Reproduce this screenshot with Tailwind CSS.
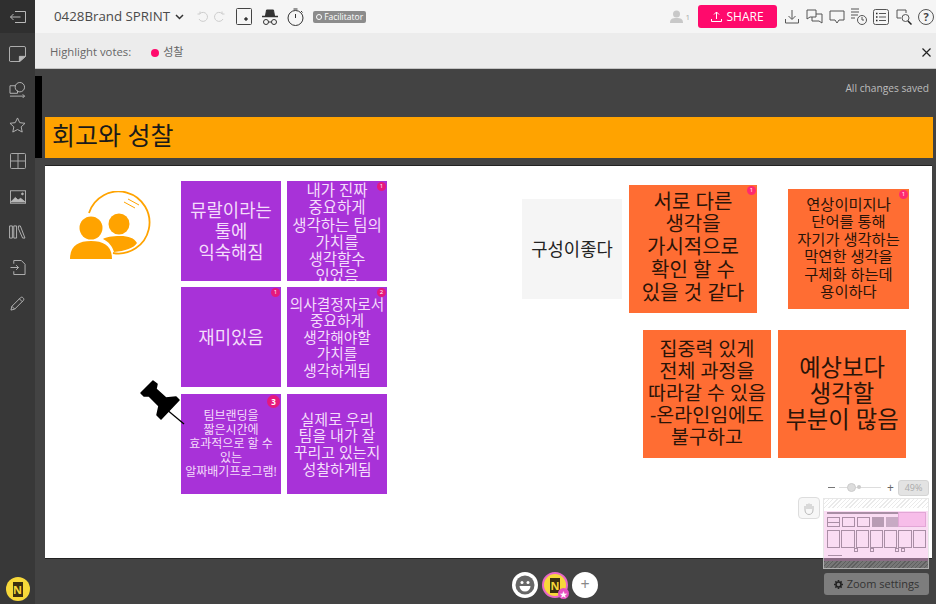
<!DOCTYPE html>
<html lang="ko">
  <head>
    <meta charset="UTF-8">
    <meta name="viewport" content="width=device-width, initial-scale=1.0">
    <script src="https://cdn.jsdelivr.net/npm/@tailwindcss/browser@4"></script>
    <title>0428Brand SPRINT</title>
  </head>
  <body class="w-[936px] h-[604px] overflow-hidden font-['Open_Sans','Noto_Sans_CJK_KR',sans-serif]">
    <div class="flex w-[936px] h-[604px]">
      <!-- left toolbar -->
      <aside class="w-[35px] shrink-0 bg-[#383838] flex flex-col items-center text-[#b8b8b8]">
        <div class="w-full h-[33px] bg-[#2f2f2f] flex items-center justify-center">
          <svg width="16" height="12" viewBox="0 0 16 12" fill="none" stroke="currentColor"><path d="M5 .5h10.500v11H5M.5 6h10M3.500 3 .5 6l3 3"/></svg>
        </div>
        <div class="grid auto-rows-[35.7px] items-center justify-items-center mt-[3px]">
          <svg width="17" height="16" viewBox="0 0 18 17" fill="none" stroke="currentColor"><path d="M2 .5h14a1.500 1.500 0 0 1 1.500 1.500v9l-6 5.500H2A1.500 1.500 0 0 1 .5 16V2A1.500 1.500 0 0 1 2 .5z"/><path d="M11 16.500V11h6.500z" fill="currentColor"/></svg>
          <svg width="17" height="16" viewBox="0 0 18 17" fill="none" stroke="currentColor"><path d="M7 4H1v8h8V9"/><circle cx="11.500" cy="5.500" r="5"/><path d="M1 15h15.500m-2-2 2 2-2 2"/></svg>
          <svg width="17" height="16" viewBox="0 0 18 17" fill="none" stroke="currentColor"><path d="m9 1 2.400 5 5.600.7-4.100 3.800 1.100 5.500L9 13.300 4 16l1.100-5.500L1 6.700 6.600 6z"/></svg>
          <svg width="16" height="16" viewBox="0 0 16 16" fill="none" stroke="#a8a8a8"><rect x=".5" y=".5" width="15" height="15" rx="1"/><path d="M8 .5v15M.5 8h15"/></svg>
          <svg width="16" height="14" viewBox="0 0 18 15" fill="none" stroke="currentColor"><rect x=".5" y=".5" width="17" height="14"/><path d="M1 13l5-5 3 3 3-2 5 4z" fill="currentColor"/><circle cx="14" cy="4" r="1" fill="currentColor"/></svg>
          <svg width="17" height="14" viewBox="0 0 18 15" fill="none" stroke="currentColor"><path d="M.5 1h3v13h-3zM5 1h3v13H5zM10 1h2l5 13h-2.500L10 4z"/></svg>
          <svg width="16" height="15" viewBox="0 0 17 16" fill="none" stroke="currentColor"><path d="M4 4V.5h8l4 4v11H4V12M.5 8H9M6.500 5.500 9 8l-2.500 2.500"/></svg>
          <svg width="15" height="15" viewBox="0 0 16 16" fill="none" stroke="currentColor"><path d="M1 15l1-4L11 2c1-1 2-1 3 0s1 2 0 3l-9 9zM2 11l3 3M10 3l3 3"/></svg>
        </div>
        <div class="mt-auto mb-[3px] w-[24px] h-[24px] rounded-full bg-[#f7d83a] flex items-center justify-center">
          <div class="w-[10px] h-[15px] bg-[#3b2f10] text-[#f7d83a] text-[11px] leading-[15px] font-bold text-center">N</div>
        </div>
      </aside>

      <div class="flex-1 min-w-0 flex flex-col">
        <!-- top bar -->
        <header class="h-[33px] bg-[#f5f5f5] flex items-center relative text-[#555]">
          <span class="ml-[19px] text-[13.300px] text-[#4a4a4a]">0428Brand SPRINT</span>
          <svg class="ml-[5px]" width="9" height="6" viewBox="0 0 9 6" fill="none" stroke="#333" stroke-width="1.500"><path d="m1 1 3.500 3.500L8 1"/></svg>
          <svg class="ml-[13px]" width="11" height="11" viewBox="0 0 11 11" fill="none" stroke="#ccc"><path d="M3 2.500A4.500 4.500 0 1 1 2 8M3 .5v2.500H.5"/></svg>
          <svg class="ml-[6px]" width="11" height="11" viewBox="0 0 11 11" fill="none" stroke="#ccc"><path d="M8 2.500A4.500 4.500 0 1 0 9 8M8 .5v2.500h2.500"/></svg>
          <svg class="ml-[11px]" width="16" height="17" viewBox="0 0 16 17" fill="none" stroke="#444"><rect x=".5" y=".5" width="15" height="16" rx="1"/><circle cx="10" cy="11" r="1.300" fill="#222"/></svg>
          <svg class="ml-[10px]" width="16" height="16" viewBox="0 0 16 16" fill="none" stroke="#333"><path d="M3.500 7 4.500 1h7l1 6z" fill="#333"/><path d="M0 7.500h16" stroke-width="1.500"/><circle cx="4" cy="13" r="2.500"/><circle cx="12" cy="13" r="2.500"/><path d="M6.500 13h3"/></svg>
          <svg class="ml-[9px]" width="17" height="18" viewBox="0 0 17 18" fill="none" stroke="#333"><circle cx="8.500" cy="10" r="7.500"/><path d="M8.500 6v4M6.500 1h4M14 3l1.500 1.500"/></svg>
          <span class="ml-[9px] h-[12px] w-[53px] justify-center rounded-[2px] bg-[#8c8c8c] text-white text-[8.500px] leading-[12px] flex items-center gap-[2px]"><span class="w-[6px] h-[6px] rounded-full border border-white"></span>Facilitator</span>

          <div class="ml-auto flex items-center">
            <svg width="13" height="13" viewBox="0 0 13 13" fill="#c8c8c8"><circle cx="6.500" cy="4" r="3.500"/><path d="M0 13c0-4 2-5 6.500-5s6.500 1 6.500 5z"/></svg>
            <span class="ml-[2px] text-[8px] text-[#aaa]">1</span>
            <button class="ml-[8px] w-[79px] h-[23px] rounded-[3px] bg-[#ff0a6c] text-white text-[12px] flex items-center justify-center gap-[4px]">
              <svg width="11" height="11" viewBox="0 0 11 11" fill="none" stroke="#fff"><path d="M5.500 8V1M3 3.500 5.500 1 8 3.500M.5 8v2.500h10V8"/></svg>SHARE
            </button>
            <svg class="ml-[8px]" width="14" height="15" viewBox="0 0 14 15" fill="none" stroke="#555"><path d="M7 1v9M3.500 7 7 10.500 10.500 7M.5 10v4h13v-4"/></svg>
            <svg class="ml-[7px]" width="17" height="15" viewBox="0 0 17 15" fill="none" stroke="#555"><path d="M1 1h9v7H4L1 10z M6 8v4h7l3 2V5h-6"/></svg>
            <svg class="ml-[6px]" width="16" height="14" viewBox="0 0 16 14" fill="none" stroke="#555"><path d="M1 1h14v9h-5l-2 3-2-3H1z"/></svg>
            <svg class="ml-[6px]" width="16" height="17" viewBox="0 0 16 17" fill="none" stroke="#555"><path d="M0 1h8M0 4h8M0 7h7M0 10h4"/><circle cx="11" cy="12" r="4.500"/><path d="M11 9v3h2"/></svg>
            <svg class="ml-[6px]" width="16" height="16" viewBox="0 0 16 16" fill="none" stroke="#555"><rect x=".5" y=".5" width="15" height="15" rx="2"/><path d="M6 4.500h7M6 8h7M6 11.500h7"/><path d="M3 4.500h1.500M3 8h1.500M3 11.500h1.500" stroke="#222" stroke-width="1.500"/></svg>
            <svg class="ml-[7px]" width="16" height="16" viewBox="0 0 16 16" fill="none" stroke="#555"><path d="M5 9H1V1h9v3"/><circle cx="9.500" cy="9" r="3.500"/><path d="m12 12 3.500 3.500" stroke-width="1.500" stroke="#222"/></svg>
            <span class="ml-[6px] mr-[2px] w-[16px] h-[16px] rounded-full border border-[#555] text-[11px] leading-[14px] text-center font-bold text-[#444]">?</span>
          </div>
        </header>

        <!-- highlight votes bar -->
        <div class="h-[36px] pt-[4px] bg-[#ececec] border-b border-[#c4c4c4] flex items-center text-[11.300px] text-[#666] relative">
          <span class="ml-[15px]">Highlight votes:</span>
          <span class="ml-[20px] w-[8px] h-[8px] rounded-full bg-[#ff0a6c]"></span>
          <span class="ml-[4px] text-[11px]">성찰</span>
          <svg class="ml-auto mr-[5px]" width="9" height="9" viewBox="0 0 9 9" fill="none" stroke="#222" stroke-width="1.200"><path d="m.5.5 8 8m0-8-8 8"/></svg>
        </div>

        <!-- board -->
        <main class="flex-1 bg-[#434343] relative overflow-hidden">
          <span class="absolute right-[7px] top-[12px] text-[10.200px] text-[#bdbdbd]">All changes saved</span>
          <div class="absolute left-0 top-[7px] w-[7px] h-[82px] bg-black"></div>
          <div class="absolute left-[10px] top-[48px] w-[888px] h-[41px] bg-[#ffa300] text-[25px] leading-[36px] pl-[7px] text-[#1a1a1a]">회고와 성찰</div>

          <div class="absolute left-[10px] top-[96px] w-[887px] h-[394px] bg-white border-y border-[#222]"></div>

          <!-- mirror people icon -->
          <svg class="absolute left-[35px] top-[122px]" width="82" height="70" viewBox="0 0 82 70" fill="#ffa300">
            <path d="M19 22A31 31 0 1 1 43 62" fill="none" stroke="#ffa300" stroke-width="1.800"/>
            <path d="M54 11l11 6M58 8l11 6" fill="none" stroke="#ffa300"/>
            <circle cx="21" cy="37" r="11.500"/>
            <circle cx="49" cy="33" r="10.500"/>
            <path d="M0 68c0-13 8-18 21-18s21 5 21 18z"/>
            <path d="M33 48c3-2 9-3 17-3 9 0 14 2 17 7-3 5-12 8-23 9-2-6-5-10-11-13z"/>
          </svg>

          <!-- sticky notes -->
          <div class="absolute left-[146px] top-[112px] w-[100px] h-[100px] bg-[#a832d8] text-[#f4ddfb] text-[17.700px] leading-[21px] text-center flex items-center justify-center">뮤랄이라는<br>툴에<br>익숙해짐</div>
          <div class="absolute left-[252px] top-[112px] w-[100px] h-[100px] bg-[#a832d8] text-[#f4ddfb] text-[15.500px] leading-[17.300px] text-center overflow-hidden pt-[1px]">내가 진짜<br>중요하게<br>생각하는 팀의<br>가치를<br>생각할수<br>있었음
            <span class="absolute right-[1px] top-[1px] w-[9px] h-[9px] rounded-full bg-[#e5197d] text-white text-[6px] leading-[9px]">1</span>
          </div>
          <div class="absolute left-[146px] top-[218px] w-[100px] h-[100px] bg-[#a832d8] text-[#f4ddfb] text-[17.800px] text-center flex items-center justify-center">재미있음
            <span class="absolute right-[1px] top-[1px] w-[9px] h-[9px] rounded-full bg-[#e5197d] text-white text-[6px] leading-[9px]">1</span>
          </div>
          <div class="absolute left-[252px] top-[218px] w-[100px] h-[100px] bg-[#a832d8] text-[#f4ddfb] text-[14.700px] leading-[16.500px] text-center flex items-center justify-center">의사결정자로서<br>중요하게<br>생각해야할<br>가치를<br>생각하게됨
            <span class="absolute right-[1px] top-[1px] w-[9px] h-[9px] rounded-full bg-[#e5197d] text-white text-[6px] leading-[9px]">2</span>
          </div>
          <div class="absolute left-[146px] top-[325px] w-[100px] h-[100px] bg-[#a832d8] text-[#f4ddfb] text-[12px] leading-[14px] text-center flex items-center justify-center">팀브랜딩을<br>짧은시간에<br>효과적으로 할 수<br>있는<br>알짜배기프로그램!
            <span class="absolute right-[1px] top-[1px] w-[13px] h-[13px] rounded-full bg-[#e5197d] text-white text-[8px] leading-[13px] font-bold">3</span>
          </div>
          <div class="absolute left-[252px] top-[325px] w-[100px] h-[100px] bg-[#a832d8] text-[#f4ddfb] text-[15px] leading-[16.700px] text-center flex items-center justify-center">실제로 우리<br>팀을 내가 잘<br>꾸리고 있는지<br>성찰하게됨</div>

          <div class="absolute left-[487px] top-[130px] w-[100px] h-[100px] bg-[#f5f5f5] text-[#222] text-[17.700px] text-center flex items-center justify-center">구성이좋다</div>

          <div class="absolute left-[594px] top-[116px] w-[128px] h-[128px] pb-[3px] bg-[#ff6d33] text-[#2a1408] text-[20px] leading-[22.700px] text-center flex items-center justify-center">서로 다른<br>생각을<br>가시적으로<br>확인 할 수<br>있을 것 같다
            <span class="absolute right-[1px] top-[1px] w-[9px] h-[9px] rounded-full bg-[#ff2a70] text-white text-[6px] leading-[9px]">1</span>
          </div>
          <div class="absolute left-[753px] top-[120px] w-[121px] h-[120px] pb-[2px] bg-[#ff6d33] text-[#2a1408] text-[15.300px] leading-[17.500px] text-center flex items-center justify-center">연상이미지나<br>단어를 통해<br>자기가 생각하는<br>막연한 생각을<br>구체화 하는데<br>용이하다
            <span class="absolute right-[1px] top-[1px] w-[9px] h-[9px] rounded-full bg-[#ff2a70] text-white text-[6px] leading-[9px]">1</span>
          </div>
          <div class="absolute left-[608px] top-[261px] w-[128px] h-[128px] pb-[3px] bg-[#ff6d33] text-[#2a1408] text-[19.500px] leading-[22px] text-center flex items-center justify-center">집중력 있게<br>전체 과정을<br>따라갈 수 있음<br>-온라인임에도<br>불구하고</div>
          <div class="absolute left-[743px] top-[261px] w-[128px] h-[128px] pb-[3px] bg-[#ff6d33] text-[#2a1408] text-[23.300px] leading-[26px] text-center flex items-center justify-center">예상보다<br>생각할<br>부분이 많음</div>

          <!-- pin -->
          <svg class="absolute left-[104px] top-[310px]" width="46" height="46" viewBox="0 0 46 46" fill="#000" stroke="#000" stroke-linejoin="round">
            <path d="M2 14 14 2 18 5 17 10 27 19 37 18 40 21 22 40 18 36 20 27 10 17 5 17z" stroke-width="1.500"/>
            <path d="M27 30 45 45" stroke-width="1.300"/>
          </svg>

          <!-- zoom control -->
          <div class="absolute left-[793px] top-[411px] flex items-center w-[70px] h-[15px]">
            <span class="w-[7px] h-[1.500px] bg-[#777]"></span>
            <span class="ml-[4px] w-[42px] h-px bg-[#ddd] relative">
              <span class="absolute left-[8px] -top-[4px] w-[9px] h-[9px] rounded-full bg-[#ddd] border border-[#ccc]"></span>
              <span class="absolute left-[18px] -top-[2px] w-[4px] h-[4px] rounded-full bg-[#ccc]"></span>
            </span>
            <span class="ml-[6px] text-[#666] text-[12px] leading-none">+</span>
          </div>
          <div class="absolute left-[863px] top-[411px] w-[31px] h-[16px] rounded-[3px] bg-[#e3e3e3] border border-[#d4d4d4] text-[9px] leading-[14px] text-center text-[#aaa]">49%</div>
          <div class="absolute left-[763px] top-[428px] w-[22px] h-[22px] rounded-[4px] bg-[#f7f7f7] border border-[#ddd] flex items-center justify-center">
            <svg width="12" height="13" viewBox="0 0 12 13" fill="none" stroke="#bbb"><path d="M2 8V4M4 7V2M6 7V1.500M8 7V2M10 8V4M2 8c0 3 2 4.500 4 4.500S10 11 10 8"/></svg>
          </div>

          <!-- minimap -->
          <div class="absolute left-[788px] top-[429px] w-[106px] h-[71px] border border-[#ddd]/70 overflow-hidden flex flex-col">
            <div class="h-[9px] bg-[repeating-linear-gradient(135deg,#eaeaea_0,#eaeaea_1px,#fff_1px,#fff_3px)]"></div>
            <div class="h-[3px] bg-white"></div>
            <div class="h-[47px] bg-[#fadcf3] relative">
              <div class="absolute left-[3px] top-[1px] w-[71px] h-[2px] border border-[#a98ea5]"></div>
              <div class="absolute left-[74px] top-[1px] w-[28px] h-[15px] bg-[#f7bde9] border border-[#e2a6d6]"></div>
              <div class="absolute left-[3px] top-[6px] w-[13px] h-[10px] border border-[#a98ea5] flex flex-col justify-center gap-[2px]"><span class="h-px bg-[#a98ea5]"></span></div>
              <div class="absolute left-[18px] top-[6px] w-[13px] h-[10px] border border-[#a98ea5]"></div>
              <div class="absolute left-[33px] top-[6px] w-[13px] h-[10px] border border-[#a98ea5]"></div>
              <div class="absolute left-[48px] top-[6px] w-[12px] h-[10px] bg-[#b89cb4]"></div>
              <div class="absolute left-[62px] top-[6px] w-[12px] h-[10px] bg-[#c8aac4]"></div>
              <div class="absolute left-[3px] top-[19px] w-[99px] h-[18px] grid grid-cols-7 gap-[1px]">
                <div class="border border-[#a98ea5]"></div>
                <div class="border border-[#a98ea5]"></div>
                <div class="border border-[#a98ea5]"></div>
                <div class="border border-[#a98ea5]"></div>
                <div class="border border-[#a98ea5]"></div>
                <div class="border border-[#a98ea5]"></div>
                <div class="border border-[#a98ea5]"></div>
              </div>
              <div class="absolute left-[30px] top-[37px] w-[4px] h-[4px] border border-[#a98ea5]"></div>
              <div class="absolute left-[46px] top-[37px] w-[4px] h-[4px] border border-[#a98ea5]"></div>
              <div class="absolute left-[71px] top-[37px] w-[4px] h-[4px] border border-[#a98ea5]"></div>
              <div class="absolute left-[77px] top-[37px] w-[4px] h-[4px] border border-[#a98ea5]"></div>
              <div class="absolute left-[4px] top-[44px] w-[14px] h-px bg-[#a98ea5]"></div>
            </div>
            <div class="h-[3px] bg-[#8c6c86]"></div>
            <div class="flex-1 bg-[repeating-linear-gradient(135deg,#5f5f5f_0,#5f5f5f_1px,#777_1px,#777_3px)]"></div>
          </div>
          <button class="absolute left-[789px] top-[504px] w-[105px] h-[22px] rounded-[3px] bg-[#7d7d7d] text-[#333] text-[11px] flex items-center justify-center gap-[4px]">
            <svg width="9" height="9" viewBox="0 0 10 10" fill="none" stroke="#222" stroke-width="1.800"><circle cx="5" cy="5" r="2.800"/><path d="M5 0v2M5 8v2M0 5h2M8 5h2M1.500 1.500 3 3M7 7l1.500 1.500M8.500 1.500 7 3M3 7 1.500 8.500"/></svg>Zoom settings
          </button>

          <!-- bottom participants -->
          <div class="absolute left-[477px] top-[503px] flex items-center gap-[4px]">
            <div class="w-[26px] h-[26px] rounded-full bg-white flex items-center justify-center">
              <svg width="20" height="20" viewBox="0 0 20 20"><circle cx="10" cy="10" r="9.500" fill="#666"/><circle cx="7" cy="7.500" r="1.500" fill="#fff"/><circle cx="13" cy="7.500" r="1.500" fill="#fff"/><path d="M4.500 11h11a5.500 5.500 0 0 1-11 0z" fill="#fff"/></svg>
            </div>
            <div class="w-[26px] h-[26px] rounded-full bg-[#f7d83a] border-2 border-[#e866c8] flex items-center justify-center relative">
              <div class="w-[10px] h-[15px] bg-[#3b2f10] text-[#f7d83a] text-[11px] leading-[15px] font-bold text-center">N</div>
              <span class="absolute -right-[3px] -bottom-[3px] w-[11px] h-[11px] rounded-full bg-[#e44fc0] text-white text-[8px] leading-[11px] text-center">★</span>
            </div>
            <div class="w-[26px] h-[26px] rounded-full bg-white text-[#888] text-[16px] leading-[25px] text-center">+</div>
          </div>
        </main>
      </div>
    </div>
  </body>
</html>
